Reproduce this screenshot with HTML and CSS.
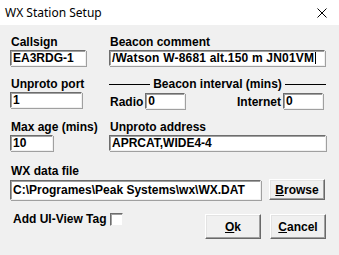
FILE: index.html
```html
<!DOCTYPE html>
<html lang="en">
<head>
    <meta charset="UTF-8">
    <title>WX Station Setup</title>
    <link rel="stylesheet" href="styles.css">
</head>
<body>
    <div class="dialog">
        <div class="titlebar">
            <span class="title">WX Station Setup</span>
            <svg class="close" viewBox="0 0 10 10">
                <path d="M0.5 0.5 L9.5 9.5 M9.5 0.5 L0.5 9.5" stroke="#000" stroke-width="1" fill="none"/>
            </svg>
        </div>

        <div class="content">
            <div class="row">
                <div class="col-left">
                    <div class="label">Callsign</div>
                    <div class="input w-callsign">EA3RDG-1</div>
                </div>
                <div class="col-right">
                    <div class="label">Beacon comment</div>
                    <div class="input w-comment">/Watson W-8681 alt.150 m JN01VM<span class="caret"></span></div>
                </div>
            </div>

            <div class="row row-gap">
                <div class="col-left">
                    <div class="label">Unproto port</div>
                    <div class="input w-port">1</div>
                </div>
                <div class="col-right">
                    <div class="legend">
                        <span class="rule"></span>
                        <span class="legend-text">Beacon interval (mins)</span>
                        <span class="rule"></span>
                    </div>
                    <div class="interval">
                        <span class="inline-label">Radio</span>
                        <div class="input w-small">0</div>
                        <span class="inline-label push">Internet</span>
                        <div class="input w-small">0</div>
                    </div>
                </div>
            </div>

            <div class="row row-gap">
                <div class="col-left">
                    <div class="label">Max age (mins)</div>
                    <div class="input w-age">10</div>
                </div>
                <div class="col-right">
                    <div class="label">Unproto address</div>
                    <div class="input w-address">APRCAT,WIDE4-4</div>
                </div>
            </div>

            <div class="file-block">
                <div class="label">WX data file</div>
                <div class="file-row">
                    <div class="input tall w-file">C:\Programes\Peak Systems\wx\WX.DAT</div>
                    <button class="btn btn-browse"><u>B</u>rowse</button>
                </div>
            </div>

            <div class="bottom-row">
                <label class="check-label">Add UI-View Tag <span class="checkbox"></span></label>
                <div class="buttons">
                    <button class="btn btn-big"><u>O</u>k</button>
                    <button class="btn btn-big"><u>C</u>ancel</button>
                </div>
            </div>
        </div>
    </div>
</body>
</html>
```

FILE: styles.css
```css
* {
    margin: 0;
    padding: 0;
    box-sizing: border-box;
}

body {
    width: 339px;
    height: 255px;
    overflow: hidden;
    background: #f0f0f0;
    font-family: 'Liberation Sans', Arial, sans-serif;
    color: #000;
}

.dialog {
    width: 339px;
    height: 255px;
    background: #f0f0f0;
}

.titlebar {
    height: 25px;
    background: #fff;
    display: flex;
    align-items: center;
    justify-content: space-between;
    padding: 0 12px 0 5px;
}

.title {
    font-family: 'Noto Sans', 'Open Sans', sans-serif;
    font-size: 12px;
}

.close {
    width: 10px;
    height: 10px;
}

.content {
    padding: 9px 13px 0 10px;
}

.row {
    display: flex;
}

.row-gap {
    margin-top: 10px;
}

.col-left {
    width: 99px;
}

.col-right {
    flex: 1;
}

.label {
    font-size: 12px;
    font-weight: bold;
    height: 16px;
    line-height: 16px;
    padding-left: 1px;
}

.input {
    height: 16px;
    background: #fff;
    border: 1px solid;
    border-color: #6d6d6d #f0f0f0 #f0f0f0 #6d6d6d;
    box-shadow: inset 1px 1px 0 #a0a0a0, 1px 1px 0 #a0a0a0;
    font-size: 12px;
    font-weight: bold;
    line-height: 14px;
    padding-left: 2px;
    white-space: nowrap;
    overflow: hidden;
}

.input.tall {
    height: 20px;
    line-height: 18px;
}

.caret {
    display: inline-block;
    width: 1px;
    height: 12px;
    background: #000;
    vertical-align: -2px;
    margin-left: 1px;
}

.w-callsign { width: 76px; }
.w-comment { width: 216px; letter-spacing: 0.2px; }
.w-port { width: 72px; }
.w-small { width: 40px; }
.w-age { width: 43px; }
.w-address { width: 217px; }
.w-file { width: 251px; }

.legend {
    display: flex;
    align-items: center;
    height: 16px;
    gap: 3px;
}

.rule {
    flex: 1;
    height: 1px;
    background: #000;
}

.legend-text {
    font-size: 12px;
    font-weight: bold;
}

.interval {
    display: flex;
    align-items: center;
    gap: 2px;
    padding-right: 3px;
}

.inline-label {
    font-size: 12px;
    font-weight: bold;
    padding-top: 3px;
    margin-left: 1px;
}

.push {
    margin-left: auto;
}

.file-block {
    margin-top: 12px;
}

.file-row {
    display: flex;
    align-items: center;
    gap: 8px;
}

.btn {
    font-family: 'Liberation Sans', Arial, sans-serif;
    font-size: 12px;
    font-weight: bold;
    background: #f0f0f0;
    border: 1px solid;
    border-color: #fff #696969 #696969 #fff;
    box-shadow: inset -1px -1px 0 #a0a0a0, inset 1px 1px 0 #e3e3e3;
    color: #000;
}

.btn-browse {
    width: 56px;
    height: 21px;
}

.btn-big {
    width: 56px;
    height: 25px;
}

.bottom-row {
    display: flex;
    justify-content: space-between;
    align-items: flex-start;
    margin-top: 14px;
}

.check-label {
    font-size: 12px;
    font-weight: bold;
    display: flex;
    align-items: center;
    gap: 3px;
    padding-left: 3px;
    margin-top: -2px;
}

.checkbox {
    width: 13px;
    height: 13px;
    background: #fff;
    border: 1px solid;
    border-color: #6d6d6d #f0f0f0 #f0f0f0 #6d6d6d;
    box-shadow: inset 1px 1px 0 #a0a0a0;
}

.buttons {
    display: flex;
    gap: 9px;
}
```
